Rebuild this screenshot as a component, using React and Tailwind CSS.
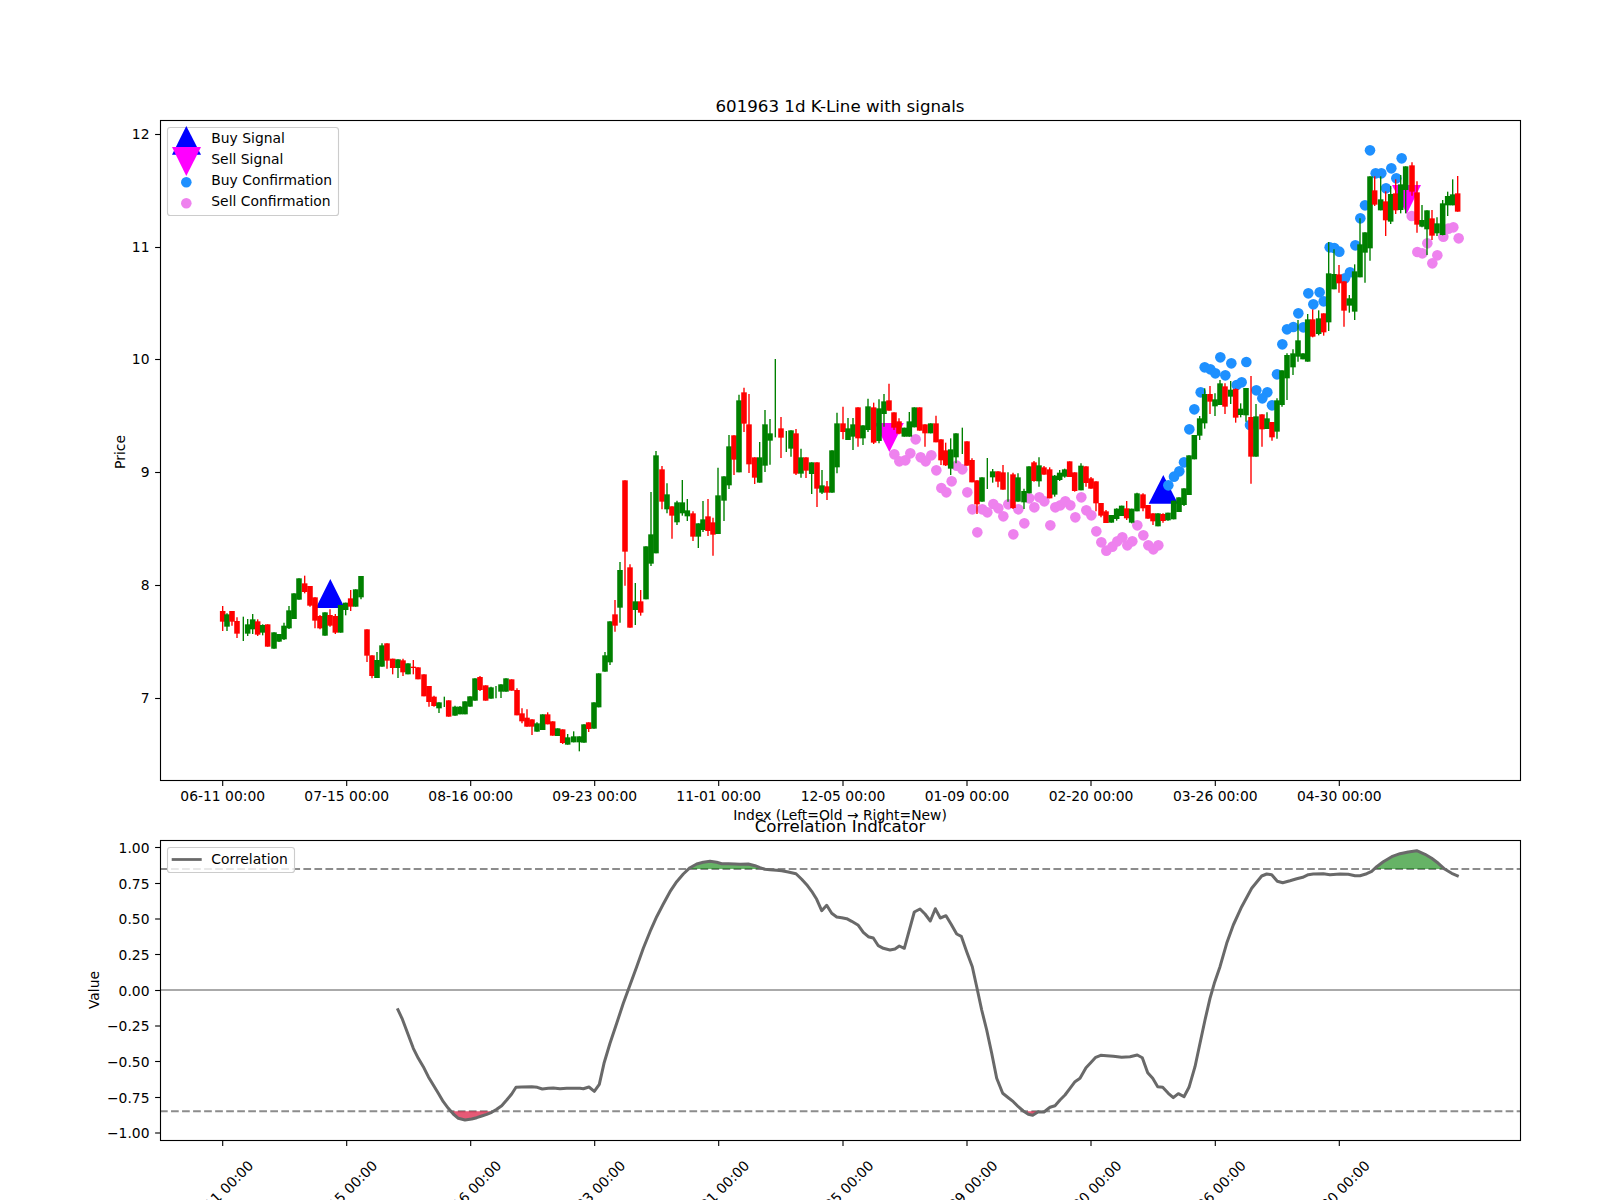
const R = 1, G = 0;
const toReal = (ox, oy, rows) =>
  rows.map(([x, c, bt, bb, wt, wb]) => ({
    x: ox + x / 3, c, bt: oy + bt / 3, bb: oy + bb / 3, wt: oy + wt / 3, wb: oy + wb / 3,
  }));

const candles = [
  ...toReal(200, 560, [
    [68,R,153,185,138,213],[81,G,163,200,160,213],[96,R,153,185,153,197],[111,R,183,221,172,234],[130,G,0,0,170,243],
    [143,G,193,221,177,228],[158,G,178,208,162,222],[173,R,184,224,178,228],[188,G,195,218,193,226],[203,R,193,260,193,260],
    [222,G,217,266,217,266],[237,G,222,245,222,246],[252,G,197,238,188,240],[267,G,151,205,138,207],[282,G,100,177,100,177],
    [297,G,55,119,55,119],[314,R,70,96,47,100],[330,R,78,137,78,140],[345,R,112,182,112,205],[360,R,168,205,165,208],
    [375,G,157,227,157,227],[390,R,165,197,148,200],[406,R,168,218,162,222],[422,G,135,218,135,218],[437,G,128,150,128,166],
    [452,R,115,140,90,153],[467,G,88,140,88,140],[483,G,48,112,48,118],[501,R,208,287,208,306],[516,R,286,348,286,355],
    [531,G,300,354,276,354],[546,G,256,320,250,320],[561,R,250,302,250,326],[578,R,296,324,296,343],[594,G,298,324,298,354],
    [609,R,301,337,296,348],[624,G,310,343,310,343],[640,R,320,324,300,343],[654,R,322,358,322,358],[672,R,343,409,343,409],
    [687,R,378,426,378,440],[702,R,410,438,407,440],[717,G,427,445,427,459],[733,G,0,0,410,441],[746,R,421,470,421,470],
    [765,G,440,467,437,467],[780,G,440,463,438,463],[795,G,424,463,424,463],[810,G,409,440,409,440],[825,G,355,422,355,422],
    [840,R,351,390,348,393],[857,R,376,422,376,422],[873,G,382,416,380,416],[888,G,0,0,378,415],[903,G,373,395,373,414],
    [918,G,355,395,355,395],[935,R,358,392,358,392],[951,R,390,466,385,466],[966,R,460,484,445,490],[981,R,473,500,448,500],
    [996,R,478,500,478,525],[1011,G,490,515,487,515],[1028,G,463,510,463,510],[1043,R,463,493,457,493],[1058,R,484,527,484,527],
    [1073,G,505,528,505,528],[1088,R,508,549,508,552],[1103,G,532,554,522,554],[1121,G,529,547,514,547],[1138,G,529,547,529,574],
    [1152,G,493,548,493,548],[1166,R,487,507,487,516],[1182,G,427,506,427,506],[1196,G,340,442,340,442],
  ]),
  ...toReal(560, 350, [
    [135,G,916,965,906,965],[150,G,814,937,814,945],[165,R,793,827,750,845],[180,G,660,773,636,818],[195,R,391,605,391,707],
    [210,R,652,833,643,833],[226,G,754,780,699,825],[242,R,754,788,720,797],[258,G,589,748,589,748],[273,G,553,641,426,648],
    [288,G,316,610,303,610],[306,R,358,455,348,478],[321,G,433,478,400,490],[336,R,469,497,469,566],[351,G,457,517,452,525],
    [367,G,457,490,390,497],[382,G,481,499,447,513],[399,R,490,560,484,573],[415,G,520,560,520,594],[429,G,508,540,453,546],
    [444,R,499,543,447,558],[459,R,517,554,503,617],[474,G,436,552,353,552],[492,G,379,452,379,513],[507,G,289,406,255,417],
    [522,R,256,329,256,375],[537,G,151,367,134,367],[552,R,127,221,113,246],[567,R,223,343,132,369],[584,R,322,383,322,402],
    [599,G,322,398,276,398],[615,G,223,347,180,366],[630,G,250,272,207,344],[646,G,0,0,27,262],[663,R,235,263,201,324],
    [679,G,0,0,243,306],[693,G,241,296,241,320],[708,R,250,371,237,375],[723,G,322,371,296,383],[738,R,322,362,322,384],
    [755,G,337,372,337,432],[771,R,337,416,337,471],[786,G,406,428,360,432],[801,R,409,428,393,450],[816,G,301,428,301,428],
    [831,G,220,352,188,370],[849,R,220,246,170,268],[864,G,235,270,204,270],[879,G,223,260,204,300],[894,R,172,265,172,290],
    [909,G,226,265,226,285],[924,G,169,240,146,246],[941,R,172,278,158,282],[957,G,175,273,148,280],[972,G,154,192,132,230],
    [987,R,151,182,101,182],[1002,R,187,233,187,240],[1017,R,214,251,205,253],[1033,G,233,260,233,260],[1048,G,214,260,186,260],
    [1063,G,172,232,172,232],[1079,R,172,242,172,242],[1095,R,223,250,223,290],[1112,G,220,250,220,250],[1128,R,220,277,197,277],
    [1143,R,268,331,268,345],[1157,R,301,346,278,348],[1172,G,298,356,265,375],[1188,G,250,322,250,340],
  ]),
  ...toReal(900, 380, [
    [187,G,0,0,143,222],[201,R,184,257,184,257],[216,R,240,307,235,307],[231,R,301,373,301,402],[246,G,292,365,292,365],
    [262,G,0,0,234,327],[278,G,274,292,267,308],[294,R,274,305,274,322],[309,R,277,329,255,329],[324,G,0,0,277,365],
    [339,R,283,384,278,387],[354,G,292,365,280,365],[372,G,333,367,326,387],[387,G,259,340,259,340],[402,R,247,303,243,305],
    [417,G,256,304,232,320],[432,R,262,284,258,284],[449,R,268,355,262,355],[464,G,287,344,285,350],[479,G,278,300,270,303],
    [494,G,268,290,266,293],[509,R,244,291,244,291],[524,R,277,333,277,335],[543,G,257,331,250,331],[558,R,259,309,259,320],
    [573,R,295,326,291,326],[588,R,304,370,304,394],[603,R,369,407,369,412],[618,R,394,429,390,429],[634,G,405,428,405,428],
    [650,G,386,417,385,422],[665,G,377,408,377,408],[680,R,385,415,363,420],[695,G,386,428,386,430],[711,G,340,394,338,394],
    [729,R,343,385,340,394],[744,R,375,416,375,416],[759,R,400,424,400,435],[774,G,400,439,400,439],[789,R,402,423,400,428],
    [804,G,398,421,398,422],[821,G,362,418,362,418],[837,G,352,396,352,396],[852,G,325,375,325,378],
  ]),
  ...toReal(1150, 130, [
    [117,G,976,1095,976,1095],[133,G,915,988,915,988],[149,G,865,917,858,930],[164,G,792,880,775,896],[180,R,792,815,768,852],
    [195,G,808,829,790,858],[210,G,760,825,750,825],[225,R,769,830,760,852],[242,G,779,800,753,822],[257,R,777,863,775,878],
    [272,G,836,855,820,862],[288,G,774,856,774,875],[303,R,861,980,738,1061],[318,G,859,980,822,980],[336,R,853,898,853,950],
    [351,G,865,897,847,897],[366,R,876,922,876,932],[381,G,811,905,805,926],[396,G,721,825,721,830],[411,G,675,745,670,810],
    [429,G,670,712,658,735],[444,G,631,680,570,695],[459,G,670,688,670,688],[473,G,568,695,552,695],[488,R,568,620,538,622],
    [506,G,565,612,541,616],[521,R,550,607,550,617],[536,G,430,577,336,603],[552,G,432,478,358,478],[567,R,433,460,405,488],
    [582,R,454,542,454,590],[598,G,505,527,495,548],[614,G,424,545,403,570],[630,G,343,442,265,442],[645,G,307,368,307,458],
    [660,G,139,355,139,392],[674,R,181,224,139,228],[692,G,208,241,139,241],[707,R,214,271,184,318],[722,G,192,275,168,282],
    [737,R,190,241,148,252],[752,G,163,240,135,250],[767,G,109,180,109,250],[786,R,106,185,97,197],[801,R,187,284,154,308],
    [816,G,270,290,225,292],[831,G,241,298,241,375],[846,R,265,317,240,330],[861,G,280,310,262,318],[878,G,220,315,210,316],
    [893,G,198,226,185,258],[908,G,193,226,148,226],[923,R,190,245,138,245],
  ]),
];

const pts = (ox, oy, rows) => rows.map(([x, y]) => [ox + x / 3, oy + y / 3]);

const blueDots = pts(1150, 130, [
  [660,61],[755,85],[724,115],[677,130],[694,130],[739,145],[708,175],[645,226],[631,265],[539,352],[553,354],[568,365],
  [616,346],[600,427],[585,445],[521,514],[509,487],[475,490],[490,523],[445,550],[411,598],[430,591],[460,592],[397,643],
  [381,733],[164,712],[181,718],[196,730],[211,682],[244,700],[289,696],[226,736],[260,765],[275,757],[152,787],[319,781],
  [352,787],[337,805],[366,826],[133,838],[118,898],[300,885],[102,997],[88,1024],[72,1040],[55,1066],
]);
const pinkDots = [
  ...pts(560, 350, [[1003,313],[1018,334],[1036,331],[1051,310],[1067,268],[1082,322],[1097,334],[1114,316],[1129,361],[1175,394],[1144,414],[1159,427],[1190,347]]),
  ...pts(900, 380, [[187,268],[202,337],[217,388],[232,457],[247,388],[262,397],[280,372],[295,385],[310,409],[325,373],[340,463],[355,388],[373,430],[388,355],[403,382],[418,352],[433,364],[451,436],[466,382],[481,376],[496,364],[511,376],[526,412],[544,352],[559,391],[574,406],[589,454],[604,487],[619,512],[637,500],[652,484],[667,472],[682,496],[697,484],[712,436],[730,466],[745,496],[760,508],[775,496]]),
  ...pts(1150, 130, [[785,258],[832,340],[802,366],[817,370],[862,376],[847,400],[880,320],[895,296],[910,292],[926,325]]),
];

const curve = [
  ...pts(80, 800, [[952,625],[966,655],[985,705],[1000,745],[1015,775],[1030,800],[1045,830],[1060,855],[1075,880],[1090,905],[1105,925],[1120,942],[1135,955],[1155,960],[1175,957],[1190,953],[1205,948],[1220,943],[1235,937],[1250,928],[1265,917],[1280,900],[1295,882],[1308,862],[1325,861],[1355,860],[1372,862],[1387,867],[1405,865],[1420,864],[1440,866],[1460,865]]),
  ...pts(580, 800, [[0,865],[10,866],[27,861],[43,874],[58,853],[72,790],[90,730],[110,670],[130,610],[150,555],[170,500],[190,445],[210,395],[230,350],[250,312],[270,275],[290,245],[310,222],[330,203],[350,192],[370,187],[390,184],[410,187],[425,191],[445,191],[465,192],[480,193],[505,192],[525,197],[540,203],[555,208],[570,209],[590,211],[605,212],[625,216],[648,221],[665,238],[680,254],[695,274],[710,298],[725,332],[740,316],[755,340],[770,351],[785,353],[800,356],[815,364],[835,376],[850,397],[865,410],[880,414],[895,437],[910,445],[930,450],[945,447],[958,438],[973,445],[1003,336],[1020,327],[1035,342],[1051,363],[1066,326],[1081,354],[1098,347],[1113,372],[1130,402],[1144,409],[1160,455],[1177,500],[1190,560],[1205,630],[1220,690],[1235,760],[1250,835],[1268,880],[1285,893],[1300,905],[1315,920],[1330,933],[1345,943],[1358,946],[1375,935],[1392,936],[1410,922],[1425,917],[1440,900],[1455,885],[1470,865],[1485,845]]),
  ...pts(1080, 800, [[0,835],[18,803],[32,788],[47,772],[62,766],[80,767],[100,769],[125,772],[150,770],[172,765],[187,773],[203,818],[218,835],[233,860],[248,862],[265,880],[280,893],[295,881],[312,890],[327,862],[345,800],[360,730],[375,660],[390,595],[403,550],[420,500],[440,430],[460,375],[485,320],[515,265],[545,228],[560,222],[575,224],[592,244],[608,248],[630,242],[650,236],[668,232],[685,224],[700,222],[730,221],[750,224],[780,222],[805,223],[825,227],[840,227],[860,221],[875,214],[890,200],[910,185],[935,170],[960,161],[985,156],[1010,152],[1035,163],[1055,175],[1075,190],[1095,208],[1115,220],[1136,229]]),
];
const toPath = (p) => p.map(([x, y], i) => `${i ? "L" : "M"}${x.toFixed(1)} ${y.toFixed(1)}`).join("");
const between = (x0, x1) => curve.filter(([x]) => x > x0 && x < x1);
const HI = 869, LO = 1111.3;
const fillPath = (x0, x1, y) => toPath([[x0, y], ...between(x0, x1), [x1, y]]) + "Z";

const tickX = [222.7, 346.7, 470.7, 594.7, 718.7, 843, 967, 1091, 1215.3, 1339.3];
const tickNames = ["06-11", "07-15", "08-16", "09-23", "11-01", "12-05", "01-09", "02-20", "03-26", "04-30"];
const priceTicks = [[12, 134], [11, 247], [10, 359], [9, 472], [8, 585], [7, 698]];
const valueTicks = [["1.00", 847.5], ["0.75", 883.5], ["0.50", 919], ["0.25", 954.5], ["0.00", 990.5], ["\u22120.25", 1026], ["\u22120.50", 1061.5], ["\u22120.75", 1097.5], ["\u22121.00", 1133]];

function PriceChart() {
  return (
    <svg width="1600" height="800" viewBox="0 0 1600 800" className="block shrink-0 overflow-visible">
      <text x="840" y="112" textAnchor="middle" fontSize="16.67">601963 1d K-Line with signals</text>
      <polygon points="315.8,608 344.8,608 330.3,579" fill="#0000ff" />
      <polygon points="1148.7,503.7 1178,503.7 1163.3,475" fill="#0000ff" />
      <polygon points="874.8,423 903.8,423 889.3,452" fill="#ff00ff" />
      <polygon points="1392,185 1421,185 1406.7,214" fill="#ff00ff" />
      {blueDots.map(([x, y], i) => <circle key={i} cx={x} cy={y} r="5.3" fill="#1e90ff" />)}
      {pinkDots.map(([x, y], i) => <circle key={i} cx={x} cy={y} r="5.3" fill="#ee82ee" />)}
      {candles.map((k, i) => (
        <g key={i} stroke={k.c ? "#ff0000" : "#008000"}>
          <line x1={k.x} x2={k.x} y1={k.wt} y2={k.wb} strokeWidth="1.39" />
          {k.bb > k.bt && <line x1={k.x} x2={k.x} y1={k.bt} y2={k.bb} strokeWidth="5.56" />}
        </g>
      ))}
      <rect x="160.5" y="120.5" width="1360" height="660" fill="none" stroke="#000" strokeWidth="1.11" />
      {priceTicks.map(([v, y]) => (
        <g key={v}>
          <line x1="155.1" x2="160" y1={y + 0.5} y2={y + 0.5} stroke="#000" strokeWidth="1.11" />
          <text x="149.5" y={y + 4.8} textAnchor="end">{v}</text>
        </g>
      ))}
      {tickX.map((x, i) => (
        <g key={x}>
          <line x1={x} x2={x} y1="781" y2="785.9" stroke="#000" strokeWidth="1.11" />
          <text x={x} y="801" textAnchor="middle">{tickNames[i]} 00:00</text>
        </g>
      ))}
      <text x="840" y="820" textAnchor="middle">Index (Left=Old → Right=New)</text>
      <text transform="translate(125 452) rotate(-90)" textAnchor="middle">Price</text>
      <rect x="167.5" y="127.5" width="171" height="88" rx="2.8" fill="#ffffff" fillOpacity="0.8" stroke="#cccccc" strokeWidth="1.11" />
      <polygon points="172,154.7 201,154.7 186.3,126" fill="#0000ff" />
      <polygon points="172,147 201,147 186.3,176" fill="#ff00ff" />
      <circle cx="186.3" cy="182.3" r="5.3" fill="#1e90ff" />
      <circle cx="186.3" cy="203.3" r="5.3" fill="#ee82ee" />
      <text x="211.3" y="142.5">Buy Signal</text>
      <text x="211.3" y="163.5">Sell Signal</text>
      <text x="211.3" y="184.5">Buy Confirmation</text>
      <text x="211.3" y="205.5">Sell Confirmation</text>
    </svg>
  );
}

function CorrelationChart() {
  return (
    <svg width="1600" height="400" viewBox="0 800 1600 400" className="block shrink-0">
      <text x="840" y="832" textAnchor="middle" fontSize="16.67">Correlation Indicator</text>
      <line x1="160" x2="1520" y1={HI} y2={HI} stroke="#808080" strokeOpacity="0.9" strokeWidth="2.08" strokeDasharray="7.7 3.33" />
      <line x1="160" x2="1520" y1={LO} y2={LO} stroke="#808080" strokeOpacity="0.9" strokeWidth="2.08" strokeDasharray="7.7 3.33" />
      <line x1="160" x2="1520" y1="990" y2="990" stroke="#aaaaaa" strokeWidth="2.08" />
      <path d={fillPath(451, 495, LO)} fill="#dc143c" fillOpacity="0.7" />
      <path d={fillPath(1027, 1039, LO)} fill="#dc143c" fillOpacity="0.7" />
      <path d={fillPath(688, 761, HI)} fill="#008000" fillOpacity="0.6" />
      <path d={fillPath(1374, 1445, HI)} fill="#008000" fillOpacity="0.6" />
      <path d={toPath(curve)} fill="none" stroke="#696969" strokeWidth="3" strokeLinejoin="round" />
      <rect x="160.5" y="840.5" width="1360" height="300" fill="none" stroke="#000" strokeWidth="1.11" />
      {valueTicks.map(([v, y]) => (
        <g key={v}>
          <line x1="155.1" x2="160" y1={y} y2={y} stroke="#000" strokeWidth="1.11" />
          <text x="149.5" y={y + 5} textAnchor="end">{v}</text>
        </g>
      ))}
      {tickX.map((x, i) => (
        <g key={x}>
          <line x1={x} x2={x} y1="1141" y2="1145.9" stroke="#000" strokeWidth="1.11" />
          <text transform={`translate(${x - 2} 1193) rotate(-45)`} textAnchor="middle" dominantBaseline="central">{tickNames[i]} 00:00</text>
        </g>
      ))}
      <text transform="translate(99 990) rotate(-90)" textAnchor="middle">Value</text>
      <rect x="167.5" y="847.5" width="127" height="25" rx="2.8" fill="#ffffff" fillOpacity="0.8" stroke="#cccccc" strokeWidth="1.11" />
      <line x1="171.7" x2="201.7" y1="859.5" y2="859.5" stroke="#696969" strokeWidth="2.78" />
      <text x="211.3" y="863.5">Correlation</text>
    </svg>
  );
}

export default function App() {
  return (
    <div className="flex h-[1200px] w-[1600px] flex-col overflow-hidden bg-white font-['DejaVu_Sans',sans-serif] text-[13.89px] text-black">
      <PriceChart />
      <CorrelationChart />
    </div>
  );
}
